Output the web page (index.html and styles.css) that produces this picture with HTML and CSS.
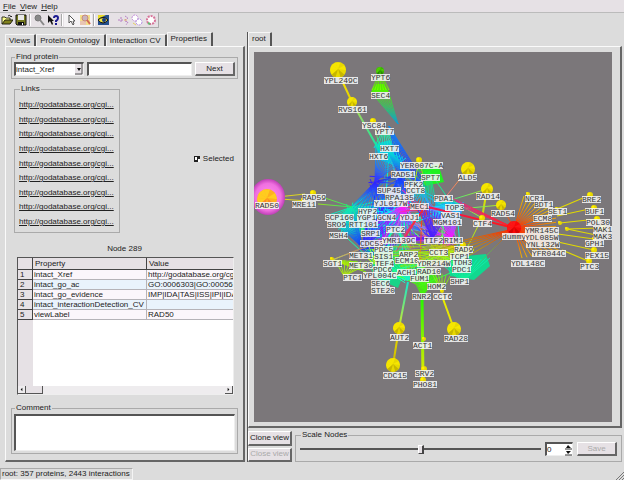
FILE: index.html
```
<!DOCTYPE html>
<html lang="en">
<head>
<meta charset="utf-8">
<title>Protein interactions</title>
<link rel="stylesheet" href="styles.css">
</head>
<body>
<nav class="menu">
  <button><u>F</u>ile</button><button><u>V</u>iew</button><button><u>H</u>elp</button>
</nav>
<div class="toolbar" role="toolbar">
  <button aria-label="Open"><svg viewBox="0 0 12 12"><path d="M1 10V3h3l1 1h4v2" fill="#ffff8c" stroke="#332"/><path d="M1 10l3-4h8l-3 4z" fill="#80801c" stroke="#221"/><path d="M7 2q2-2 3 1l1-1" fill="none" stroke="#222"/></svg></button>
  <button aria-label="Save file"><svg viewBox="0 0 12 12"><path d="M1 1h10v10H2l-1-1z" fill="#777a20" stroke="#111"/><path d="M3 1h6v5H3z" fill="#e8e8e8"/><path d="M3 8h6v3H3z" fill="#111"/><path d="M7 9h1v2H7z" fill="#fff"/></svg></button>
  <span class="sep"></span>
  <button aria-label="Find"><svg viewBox="0 0 12 12"><circle cx="5" cy="4" r="3" fill="#888" stroke="#777"/><path d="M7 6l4 5" stroke="#888" stroke-width="2"/></svg></button>
  <button aria-label="What's this"><svg viewBox="0 0 12 12"><path d="M1 1v8l2-2 2 4 1-1-1-3h2z" fill="#111"/><path d="M7 4q0-2 2-2t2 2-2 3v1M9 9v2" fill="none" stroke="#1a1a90" stroke-width="2"/></svg></button>
  <span class="sep"></span>
  <button class="on" aria-label="Select"><svg viewBox="0 0 12 12"><path d="M4 1v8l2-2 2 4 1-1-1-3h2z" fill="#fff" stroke="#555"/></svg></button>
  <button class="on" aria-label="Zoom"><svg viewBox="0 0 12 12"><path d="M1 1h10v10H1z" fill="#f3e08a"/><path d="M1 7h6v4H1z" fill="#e9c5b2"/><circle cx="6" cy="4" r="3" fill="#c8b4bd" stroke="#c9897c"/><path d="M8 6l3 4" stroke="#d06655" stroke-width="2"/></svg></button>
  <span class="sep"></span>
  <button aria-label="Overview"><svg viewBox="0 0 12 12"><path d="M1 1h11v10H1z" fill="#234e8c"/><path d="M1 1h8L1 5z" fill="#e9da24"/><path d="M1 6q5-5 10 0-5 6-10 0z" fill="#f4e53a" stroke="#111"/><circle cx="7" cy="6" r="2" fill="#163a82"/></svg></button>
  <span class="gap"></span>
  <button aria-label="Spread"><svg viewBox="0 0 12 12"><path d="M1 6h6M4 3v6M8 2l3 2-3 2M8 7l3 1-2 3" fill="none" stroke="#b77fc4" stroke-dasharray="2 1"/><path d="M7 6h3" stroke="#e4b06a"/></svg></button>
  <button aria-label="Cluster"><svg viewBox="0 0 12 12"><circle cx="4" cy="4" r="3" fill="#fff" stroke="#c28ad8" stroke-dasharray="2 1"/><circle cx="8" cy="8" r="3" fill="#fff" stroke="#b08be0" stroke-dasharray="2 1"/><path d="M2 9l3 2" stroke="#e5cf62"/></svg></button>
  <button aria-label="Circle layout"><svg viewBox="0 0 12 12"><circle cx="6" cy="6" r="4" fill="#fff" stroke="#d77399" stroke-width="2" stroke-dasharray="2 1"/><path d="M3 9l2 1" stroke="#63bb70" stroke-width="2"/></svg></button>
</div>

<main class="main">
  <section class="left">
    <div class="tabs" role="tablist">
      <button role="tab">Views</button><button role="tab">Protein Ontology</button><button role="tab">Interaction CV</button><button role="tab" class="active" aria-selected="true">Properties</button>
    </div>
    <div class="page">
      <fieldset class="find">
        <legend>Find protein</legend>
        <span class="combo">
          <select aria-label="Property to search"><option>intact_Xref</option></select>
          <svg viewBox="0 0 8 11" aria-hidden="true"><path d="M0 0h8v11H0z" fill="#e6e1e5"/><path d="M7 0v10H0" fill="none" stroke="#555"/><path d="M2 4h4L4 7z" fill="#111"/></svg>
        </span>
        <input class="sunken" type="text" aria-label="Search text">
        <button class="btn">Next</button>
      </fieldset>
      <div class="middle">
        <fieldset class="links">
          <legend>Links</legend>
          <a href="#">http://godatabase.org/cgi...</a>
          <a href="#">http://godatabase.org/cgi...</a>
          <a href="#">http://godatabase.org/cgi...</a>
          <a href="#">http://godatabase.org/cgi...</a>
          <a href="#">http://godatabase.org/cgi...</a>
          <a href="#">http://godatabase.org/cgi...</a>
          <a href="#">http://godatabase.org/cgi...</a>
          <a href="#">http://godatabase.org/cgi...</a>
          <a href="#">http://godatabase.org/cgi...</a>
        </fieldset>
        <label class="check"><input type="checkbox" checked>Selected</label>
      </div>
      <h2 class="node">Node 289</h2>
      <div class="grid">
        <div class="cells">
          <table>
            <thead><tr><th></th><th>Property</th><th>Value</th></tr></thead>
            <tbody>
              <tr><th>1</th><td>intact_Xref</td><td>http://godatabase.org/cgi-bin</td></tr>
              <tr><th>2</th><td>intact_go_ac</td><td>GO:0006303|GO:0005634</td></tr>
              <tr><th>3</th><td>intact_go_evidence</td><td>IMP|IDA|TAS|ISS|IPI|IDA|IMP</td></tr>
              <tr><th>4</th><td>intact_interactionDetection_CV</td><td></td></tr>
              <tr><th>5</th><td>viewLabel</td><td>RAD50</td></tr>
            </tbody>
          </table>
        </div>
        <div class="hscroll">
          <button aria-label="Scroll left"><svg viewBox="0 0 8 8"><path d="M5 2v4L3 4z" fill="#111"/></svg></button>
          <span class="thumb"></span>
          <button class="end" aria-label="Scroll right"><svg viewBox="0 0 8 8"><path d="M3 2v4l2-2z" fill="#111"/></svg></button>
        </div>
      </div>
      <fieldset class="comment">
        <legend>Comment</legend>
        <textarea class="sunken" aria-label="Comment"></textarea>
      </fieldset>
    </div>
  </section>

  <section class="right">
    <div class="tabs" role="tablist"><button role="tab" class="active" aria-selected="true">root</button></div>
    <div class="view"><svg id="graph" viewBox="254 52 358 370" preserveAspectRatio="xMidYMid slice"></svg></div>
    <div class="controls">
      <div class="actions">
        <button class="btn">Clone view</button>
        <button class="btn" disabled>Close view</button>
      </div>
      <fieldset class="scale">
        <legend>Scale Nodes</legend>
        <input type="range" min="-10" max="10" value="0" aria-label="Scale nodes">
        <span class="spin">
          <input type="text" value="0" aria-label="Scale value">
          <svg viewBox="0 0 7 12" aria-hidden="true"><path d="M0 5h7M0 11h7" stroke="#333" fill="none"/><path d="M1 4h5L3 1zM1 7h5L3 10z" fill="#111"/></svg>
        </span>
        <button class="btn" disabled>Save</button>
      </fieldset>
    </div>
  </section>
</main>
<footer class="status">
  <span>root: 357 proteins, 2443 interactions</span>
  <svg viewBox="0 0 8 8" aria-hidden="true"><path d="M0 8L8 0M3 8l5-5M6 8l2-2" stroke="#777"/></svg>
</footer>
<script src="graph.js"></script>
</body>
</html>
```
FILE: styles.css
```
* { box-sizing: border-box; }
html { height: 100%; }
body {
  margin: 0;
  height: 100%;
  display: flex;
  flex-direction: column;
  background: #dcdcdc;
  color: #222;
  font: 8px/10px "Liberation Sans", Arial, sans-serif;
  overflow: hidden;
}
button, input, select, textarea { font: inherit; color: inherit; margin: 0; padding: 0; border-radius: 0; outline: none; }
button { background: none; border: 0; }
svg { display: block; }

.menu { display: flex; gap: 4px; height: 13px; padding: 1px 3px 0; background: #e6e1e5; border-bottom: 1px solid #bbb; }
.toolbar { display: flex; align-items: center; align-self: flex-start; height: 15px; background: #e6e1e5; border: solid #aaa; border-width: 0 1px 1px 0; }
.toolbar button { width: 14px; height: 14px; padding: 1px; }
.toolbar .on { background: #f4f2f4; }
.toolbar svg { width: 12px; height: 12px; }
.sep { width: 2px; height: 12px; margin: 0 1px; border-left: 1px solid #aaa; border-right: 1px solid #fff; }
.gap { width: 6px; }

.main { flex: 1; min-height: 0; display: flex; gap: 2px; padding: 4px 2px 0 5px; }
.left { width: 240px; display: flex; flex-direction: column; }
.right { flex: 1; min-width: 0; display: flex; flex-direction: column; border-left: 1px solid #555; }
.tabs { display: flex; align-items: flex-end; height: 14px; }
.tabs button { height: 12px; padding: 0 4px 0 3px; border: solid; border-width: 1px 2px 0 1px; border-color: #f6f6f6 #555 #fff #f6f6f6; border-radius: 1px 1px 0 0; white-space: nowrap; }
.tabs .active { height: 14px; padding-bottom: 1px; }
.page, .view { flex: 1; min-height: 0; border: solid; border-width: 1px 2px 2px 1px; border-color: #fafafa #666 #666 #fafafa; }
.page { display: flex; flex-direction: column; padding: 5px 5px 6px; }

fieldset { min-width: 0; margin: 0; border: 1px solid #aaa; padding: 0 2px 2px; }
legend { padding: 0 1px; margin-left: 1px; line-height: 10px; }
.sunken { background: #fff; border: solid; border-width: 2px 1px 1px 2px; border-color: #555 #eee #eee #555; }
.btn { background: #e6e1e5; border: solid; border-width: 1px 2px 2px 1px; border-color: #fff #666 #666 #fff; }
.btn:disabled { color: #aaa; }

.find { display: flex; gap: 3px; }
.find .sunken { flex: 1; min-width: 0; height: 14px; }
.find .btn { width: 40px; height: 14px; }
.combo { display: flex; align-items: center; width: 70px; height: 14px; background: #fff; border: solid; border-width: 2px 1px 1px 2px; border-color: #555 #eee #eee #555; }
.combo select { flex: 1; min-width: 0; appearance: none; border: 0; background: none; }
.combo svg { width: 8px; height: 11px; }

.middle { display: flex; justify-content: space-between; align-items: center; margin: 5px 4px 0 3px; }
.links { width: 106px; height: 149px; display: flex; flex-direction: column; justify-content: space-between; padding: 6px 4px 5px; }
.links a { color: inherit; white-space: nowrap; }
.check { display: flex; align-items: center; gap: 3px; }
.check input { appearance: none; width: 6px; height: 6px; background: #fff; border: solid #222; border-width: 1px 0 0 1px; }
.check input:checked { background: conic-gradient(#222 25%, #fff 0 50%, #222 0 75%, #fff 0); }

.node { margin: 11px 0 3px; font: inherit; text-align: center; }
.grid { flex: 1; min-height: 0; margin: 0 4px 0 6px; display: flex; flex-direction: column; background: #fff; border: 1px solid; border-color: #555 #eee #eee #555; }
.cells { flex: 1; min-height: 0; overflow: hidden; background: linear-gradient(to right, #e6e1e5 15px, #fff 15px); }
table { width: 100%; table-layout: fixed; border-collapse: separate; border-spacing: 0; }
th, td { height: 10px; padding: 0 1px; line-height: 9px; font-weight: normal; text-align: left; white-space: nowrap; overflow: hidden; border: solid #b5b3b8; border-width: 0 1px 1px 0; }
th { background: #e6e1e5; border-color: #444; }
thead th { height: 12px; padding: 0 2px; }
th:first-child { width: 15px; padding-left: 2px; }
thead th:nth-child(2) { width: 114px; }
td { background: #fbf6fb; }
tr:nth-child(even) td { background: #e9f3fc; }
td:last-child, th:last-child:not(:first-child) { border-right: 0; }
.hscroll { display: flex; height: 8px; background: #eeecee; }
.hscroll button { width: 8px; height: 8px; border: solid #555; border-width: 0 1px 1px 0; }
.thumb { width: 17px; background: #e6e1e5; border: solid #555; border-width: 0 1px 1px 0; }
.hscroll .end { margin-left: auto; }
.hscroll svg { width: 7px; height: 7px; }
.comment { margin-top: 8px; }
.comment legend { margin-bottom: 1px; }
.comment textarea { display: block; width: 100%; height: 37px; resize: none; }

.view { padding: 5px 8px 4px 5px; }
#graph { width: 100%; height: 100%; background: #7b777a; font: 8px "Liberation Mono", monospace; }
.controls { display: flex; gap: 3px; padding-top: 3px; height: 34px; }
.actions { display: flex; flex-direction: column; gap: 2px; width: 44px; }
.actions .btn { flex: 1; white-space: nowrap; }
.scale { flex: 1; display: flex; align-items: center; gap: 4px; padding: 0 4px 2px; }
.scale legend { line-height: 8px; }
.scale .btn { width: 40px; height: 14px; }
input[type=range] { flex: 1; min-width: 0; appearance: none; height: 10px; background: linear-gradient(#555, #555) center / 100% 2px no-repeat; }
input[type=range]::-webkit-slider-thumb { appearance: none; width: 6px; height: 9px; background: #e6e1e5; border: solid; border-width: 1px 2px 1px 1px; border-color: #fff #444 #444 #fff; }
.spin { display: flex; align-items: center; width: 28px; height: 14px; background: #fff; border: solid; border-width: 2px 1px 1px 2px; border-color: #555 #eee #eee #555; }
.spin input { flex: 1; min-width: 0; border: 0; background: none; }
.spin svg { width: 7px; height: 12px; }

.status { display: flex; justify-content: space-between; align-items: flex-end; height: 18px; }
.status span { padding: 0 2px 0 1px; border: 1px solid; border-color: #aaa #f4f4f4 #f4f4f4 #aaa; }
.status svg { width: 8px; height: 8px; }
```
FILE: graph.js
```
const svg = document.getElementById("graph");
const NS = "http://www.w3.org/2000/svg";

function add(name, attrs, parent = svg) {
  const el = document.createElementNS(NS, name);
  for (const key in attrs) el.setAttribute(key, attrs[key]);
  parent.appendChild(el);
  return el;
}

let seed = 11;
function random() {
  seed = (seed * 16807) % 2147483647;
  return seed / 2147483647;
}

const defs = add("defs", {});
let gradients = 0;

// One edge, shaded from the colour of its first node to that of its second.
function edge(x1, y1, x2, y2, c1, c2, width = 1) {
  const id = "e" + gradients++;
  const g = add("linearGradient", { id, gradientUnits: "userSpaceOnUse", x1, y1, x2, y2 }, defs);
  add("stop", { offset: 0, "stop-color": c1 }, g);
  add("stop", { offset: 1, "stop-color": c2 }, g);
  add("path", { d: `M${x1} ${y1}L${x2} ${y2}`, stroke: `url(#${id})`, "stroke-width": width });
}

// Edges that leave one hub and end along a segment.
function fan(x, y, ax, ay, bx, by, n, c1, c2) {
  for (let i = 0; i < n; i++) {
    const t = n > 1 ? i / (n - 1) : 0;
    edge(x, y, ax + (bx - ax) * t, ay + (by - ay) * t, c1, c2);
  }
}

const patches = [
  ["375,144 390,140 404,160 396,166 380,160", "#10c8d8"],
  ["332,222 352,206 374,206 376,236 346,234", "#18c8b0"],
  ["372,214 384,202 398,208 402,226 384,240 368,236", "#08b8d8"],
  ["436,202 464,202 460,220 432,218", "#18b8e0"],
  ["366,250 400,244 408,264 398,288 376,278", "#18d488"],
  ["446,258 486,254 490,266 474,280 450,276", "#10d890"],
  ["410,270 434,268 438,282 424,292", "#40e028"],
  ["422,168 438,164 444,182 424,186", "#20f020"],
  ["371,92 389,92 384,84 376,84", "#50f000"],
];
for (const [points, fill] of patches) add("polygon", { points, fill });

// Dense core of the network.
const hubs = [
  [375, 182, "#3020ff"], [389, 152, "#00f0c0"], [352, 207, "#10f0a0"], [390, 212, "#00e8ff"],
  [424, 208, "#ff3018"], [404, 206, "#ff20ff"], [400, 178, "#2038ff"], [430, 172, "#18ff28"],
  [450, 210, "#18d8ff"], [452, 237, "#f818ff"], [432, 238, "#5818ff"], [362, 247, "#1830ff"],
  [384, 240, "#b018ff"], [384, 272, "#10ff98"], [408, 280, "#10ffd0"], [420, 262, "#ff7020"],
  [440, 256, "#a8ff10"], [462, 268, "#18ff90"], [424, 284, "#40ff10"], [372, 262, "#b8ff10"],
  [396, 226, "#00ffc8"], [420, 190, "#10b8ff"], [348, 228, "#10ffb0"], [382, 208, "#4028ff"],
];
for (let i = 0; i < 420; i++) {
  const a = hubs[Math.floor(random() * hubs.length)];
  const b = hubs[Math.floor(random() * hubs.length)];
  const reach = Math.hypot(a[0] - b[0], a[1] - b[1]);
  const jx = random() * 14 - 7, jy = random() * 12 - 6;
  if (reach < 72) edge(a[0], a[1], b[0] + jx, b[1] + jy, a[2], b[2]);
}

fan(398, 124, 371, 92, 389, 94, 8, "#1098d8", "#50f000");
fan(380, 72, 372, 90, 389, 90, 7, "#30c800", "#80ff00");
fan(384, 128, 374, 148, 400, 150, 8, "#40e880", "#00e8e0");
fan(389, 126, 396, 158, 424, 182, 8, "#1090f0", "#2030ff");
fan(375, 182, 376, 144, 406, 158, 11, "#3828ff", "#00d8f0");
fan(375, 182, 350, 208, 392, 208, 14, "#3020ff", "#10a0f0");
fan(386, 148, 398, 172, 428, 188, 14, "#00f0d0", "#2040ff");
fan(400, 176, 386, 200, 414, 204, 8, "#1830ff", "#0890ff");
fan(430, 172, 410, 204, 436, 204, 10, "#18ff20", "#20b0f0");
fan(352, 207, 326, 216, 346, 238, 9, "#10f0a0", "#10e0d8");
fan(362, 247, 332, 220, 354, 206, 12, "#1830ff", "#10e0c0");
fan(362, 247, 368, 216, 398, 222, 10, "#1828ff", "#8030ff");
fan(452, 238, 434, 212, 462, 208, 10, "#ff10ff", "#3898ff");
fan(432, 240, 418, 204, 446, 216, 11, "#4818ff", "#5038ff");
fan(404, 206, 370, 224, 416, 238, 11, "#ff18ff", "#8038ff");
fan(424, 208, 406, 232, 396, 252, 6, "#ff2818", "#e03888");
fan(424, 208, 402, 190, 400, 212, 5, "#ff2818", "#f030c8");
fan(344, 276, 334, 259, 372, 262, 8, "#b8f000", "#80e020");
fan(332, 260, 358, 262, 366, 272, 5, "#c8f000", "#80f000");
fan(332, 260, 362, 248, 374, 244, 2, "#c0c860", "#b07870");
fan(384, 288, 368, 264, 402, 266, 11, "#10f0b0", "#10f080");
fan(408, 280, 380, 262, 430, 262, 13, "#10f0d0", "#20f880");
fan(422, 296, 412, 276, 438, 278, 9, "#38f800", "#58f010");
fan(442, 292, 430, 270, 450, 276, 6, "#b8f010", "#70e020");
fan(462, 282, 442, 264, 490, 258, 12, "#10f090", "#10e8b0");
fan(474, 250, 376, 254, 410, 272, 8, "#d8f000", "#68f020");
fan(460, 247, 384, 242, 400, 266, 6, "#f0d000", "#78e828");
fan(352, 207, 313, 194, 318, 204, 2, "#20e870", "#a0e020");
fan(268, 198, 305, 194, 307, 201, 2, "#e8d020", "#d8d820");
edge(338, 72, 352, 102, "#ffe800", "#e0d000", 2);
edge(352, 102, 379, 150, "#c8d840", "#00e8b0", 2);
edge(373, 121, 380, 148, "#b0e820", "#00e8b0");
edge(419, 160, 414, 186, "#d8e800", "#a0e020");
edge(419, 160, 426, 186, "#d8e800", "#30e020");
edge(468, 169, 440, 204, "#f0a030", "#f06890");
edge(487, 189, 438, 204, "#b0e828", "#20e8a0");
edge(487, 189, 482, 218, "#e8e800", "#b8d818", 2);
edge(501, 205, 448, 210, "#c0e820", "#20e8a0");
edge(482, 218, 466, 250, "#e0e800", "#90e828");
edge(482, 218, 448, 198, "#b8e820", "#10e8c0");
edge(514, 228, 501, 205, "#ff2010", "#e8a018");

// Spokes of the red hub.
fan(514, 228, 524, 196, 556, 211, 9, "#ff2000", "#e8d000");
fan(514, 228, 556, 218, 556, 248, 8, "#ff2000", "#f0a000");
fan(514, 228, 522, 258, 562, 252, 9, "#ff2000", "#f0b800");
fan(514, 228, 452, 198, 464, 208, 4, "#ff2020", "#e82888");
fan(514, 229, 410, 252, 458, 262, 6, "#ff2800", "#88d828");
edge(514, 228, 424, 206, "#ff1818", "#f01858", 2);
edge(514, 228, 476, 266, "#ff3000", "#10e890");
for (const [a, b, c, d] of [
  [557, 209, 590, 195], [557, 216, 594, 208], [560, 223, 597, 219], [567, 229, 600, 228],
  [567, 229, 601, 236], [558, 234, 594, 239], [558, 242, 594, 250], [562, 250, 588, 261],
]) edge(a, b, c, d, "#e8e000", "#d8d000", 1.2);

edge(408, 282, 399, 328, "#10e8d0", "#d8e820", 2);
edge(399, 328, 393, 365, "#f0e000", "#c8b800", 2);
edge(422, 296, 423, 380, "#20f800", "#f0e800", 3);
edge(442, 296, 454, 329, "#e8f000", "#e8e000", 2);

// A faceted ball: bright facets toward the upper left, darker ones below.
function ball(x, y, r, light = "#fff000", mid = "#e8d800", dark = "#b0a000") {
  add("circle", { cx: x, cy: y, r, fill: mid });
  if (r < 4) {
    add("circle", { cx: x - 1, cy: y - 1, r: r / 2, fill: light });
    return;
  }
  const shades = [mid, dark, mid, dark, light, light, light, light, mid, light];
  for (let i = 0; i < 10; i++) {
    const a = i * Math.PI / 5, b = a + Math.PI / 5;
    add("path", {
      d: `M${x} ${y - 1}L${x + r * Math.cos(a)} ${y + r * Math.sin(a)}L${x + r * Math.cos(b)} ${y + r * Math.sin(b)}z`,
      fill: shades[i], opacity: 0.6,
    });
  }
}

const halo = add("radialGradient", { id: "halo" }, defs);
add("stop", { offset: 0, "stop-color": "#ff90f0" }, halo);
add("stop", { offset: 0.75, "stop-color": "#f070e0" }, halo);
add("stop", { offset: 1, "stop-color": "#c040b8" }, halo);
add("ellipse", { cx: 268, cy: 197, rx: 17, ry: 18, fill: "url(#halo)" });
ball(267, 199, 10, "#ffe020", "#ffb020", "#ff6a30");

for (const [x, y, r] of [
  [338, 70, 8], [352, 102, 5], [373, 121, 3], [419, 160, 3], [468, 169, 7], [487, 189, 6],
  [501, 205, 5], [482, 218, 3], [399, 328, 6], [393, 365, 7], [454, 329, 7], [424, 339, 2],
  [424, 369, 3], [423, 380, 3], [313, 193, 3], [303, 200, 2], [332, 259, 2], [442, 291, 2],
  [590, 195, 3], [594, 208, 3], [597, 219, 3], [567, 229, 2], [603, 228, 3], [594, 239, 2],
  [594, 250, 3], [589, 261, 3], [560, 223, 2], [528, 194, 2], [463, 245, 3], [557, 209, 2],
]) ball(x, y, r);
ball(380, 71, 4, "#60e000", "#38b800", "#206800");
ball(514, 228, 7, "#ff2020", "#f80808", "#c00000");

const labels = [
  ["YPL249C", 341, 80], ["YPT6", 380, 77], ["SEC4", 380, 95], ["RVS161", 352, 109],
  ["YSC84", 374, 125], ["YPT7", 384, 131], ["HXT7", 389, 148], ["HXT6", 378, 156],
  ["YER007C-A", 421, 165], ["RAD51", 403, 174], ["SPT7", 430, 177], ["PFK2", 413, 184],
  ["CCT8", 415, 190], ["SUP45", 389, 190], ["RPA135", 399, 197], ["YJL017W", 391, 203],
  ["PDA1", 443, 198], ["MEC1", 419, 206], ["TOP3", 454, 207], ["HYP2", 367, 211],
  ["VAS1", 450, 215], ["SCP160", 339, 217], ["YGP1", 366, 217], ["GCN4", 386, 217],
  ["YDJ1", 409, 217], ["MGM101", 447, 222], ["SRO9", 336, 224], ["RTT101", 363, 224],
  ["PTC2", 395, 229], ["SRP1", 370, 233], ["MSH4", 338, 235], ["CDC53", 372, 243],
  ["YMR139C", 399, 240], ["TIF2", 433, 240], ["RIM1", 453, 240], ["ALD5", 467, 177],
  ["RAD14", 488, 196], ["RAD54", 503, 213], ["CTF4", 482, 223], ["PDC5", 383, 249],
  ["MET31", 361, 255], ["SIS1", 383, 256], ["TEF4", 384, 263], ["MET30", 361, 265],
  ["PDC6", 382, 269], ["YPL004C", 380, 275], ["SEC6", 380, 283], ["STE20", 383, 290],
  ["SGT1", 332, 263], ["PTC1", 352, 277], ["CCT3", 438, 252], ["ARP2", 408, 254],
  ["ECM10", 407, 260], ["YDR214W", 434, 263], ["ACH1", 406, 272], ["RAD10", 429, 271],
  ["FUM1", 419, 278], ["RAD9", 463, 249], ["TCP1", 459, 256], ["TDH3", 462, 262],
  ["PDC1", 461, 269], ["SHP1", 459, 281], ["HOM2", 436, 286], ["RNR2", 421, 296],
  ["CCT6", 442, 296], ["AUT2", 399, 337], ["ACT1", 422, 345], ["RAD28", 456, 338],
  ["CDC15", 395, 375], ["SRV2", 424, 373], ["PHO81", 425, 384], ["RAD50", 267, 205],
  ["RAD59", 314, 197], ["MRE11", 304, 204], ["NCR1", 534, 198], ["BDT1", 543, 204],
  ["SET1", 557, 211], ["ECM8", 542, 218], ["YMR145C", 542, 230], ["dummy", 514, 236],
  ["YDL085W", 542, 237], ["YNL132W", 543, 244], ["YFR044C", 549, 253], ["YDL148C", 528, 263],
  ["BRE2", 591, 199], ["BUF1", 594, 211], ["POL30", 598, 222], ["MAK1", 602, 229],
  ["MAK3", 602, 236], ["GPH1", 594, 243], ["PEX15", 597, 255], ["PTC3", 589, 266],
];
for (const [name, x, y] of labels) {
  const w = Math.round(name.length * 4.8);
  add("rect", { x: Math.round(x - w / 2), y: y - 3, width: w, height: 7, fill: "#f8f8f8", "fill-opacity": 0.85 });
  add("text", { x: Math.round(x - w / 2), y: y + 3, fill: "#333" }).textContent = name;
}
```
